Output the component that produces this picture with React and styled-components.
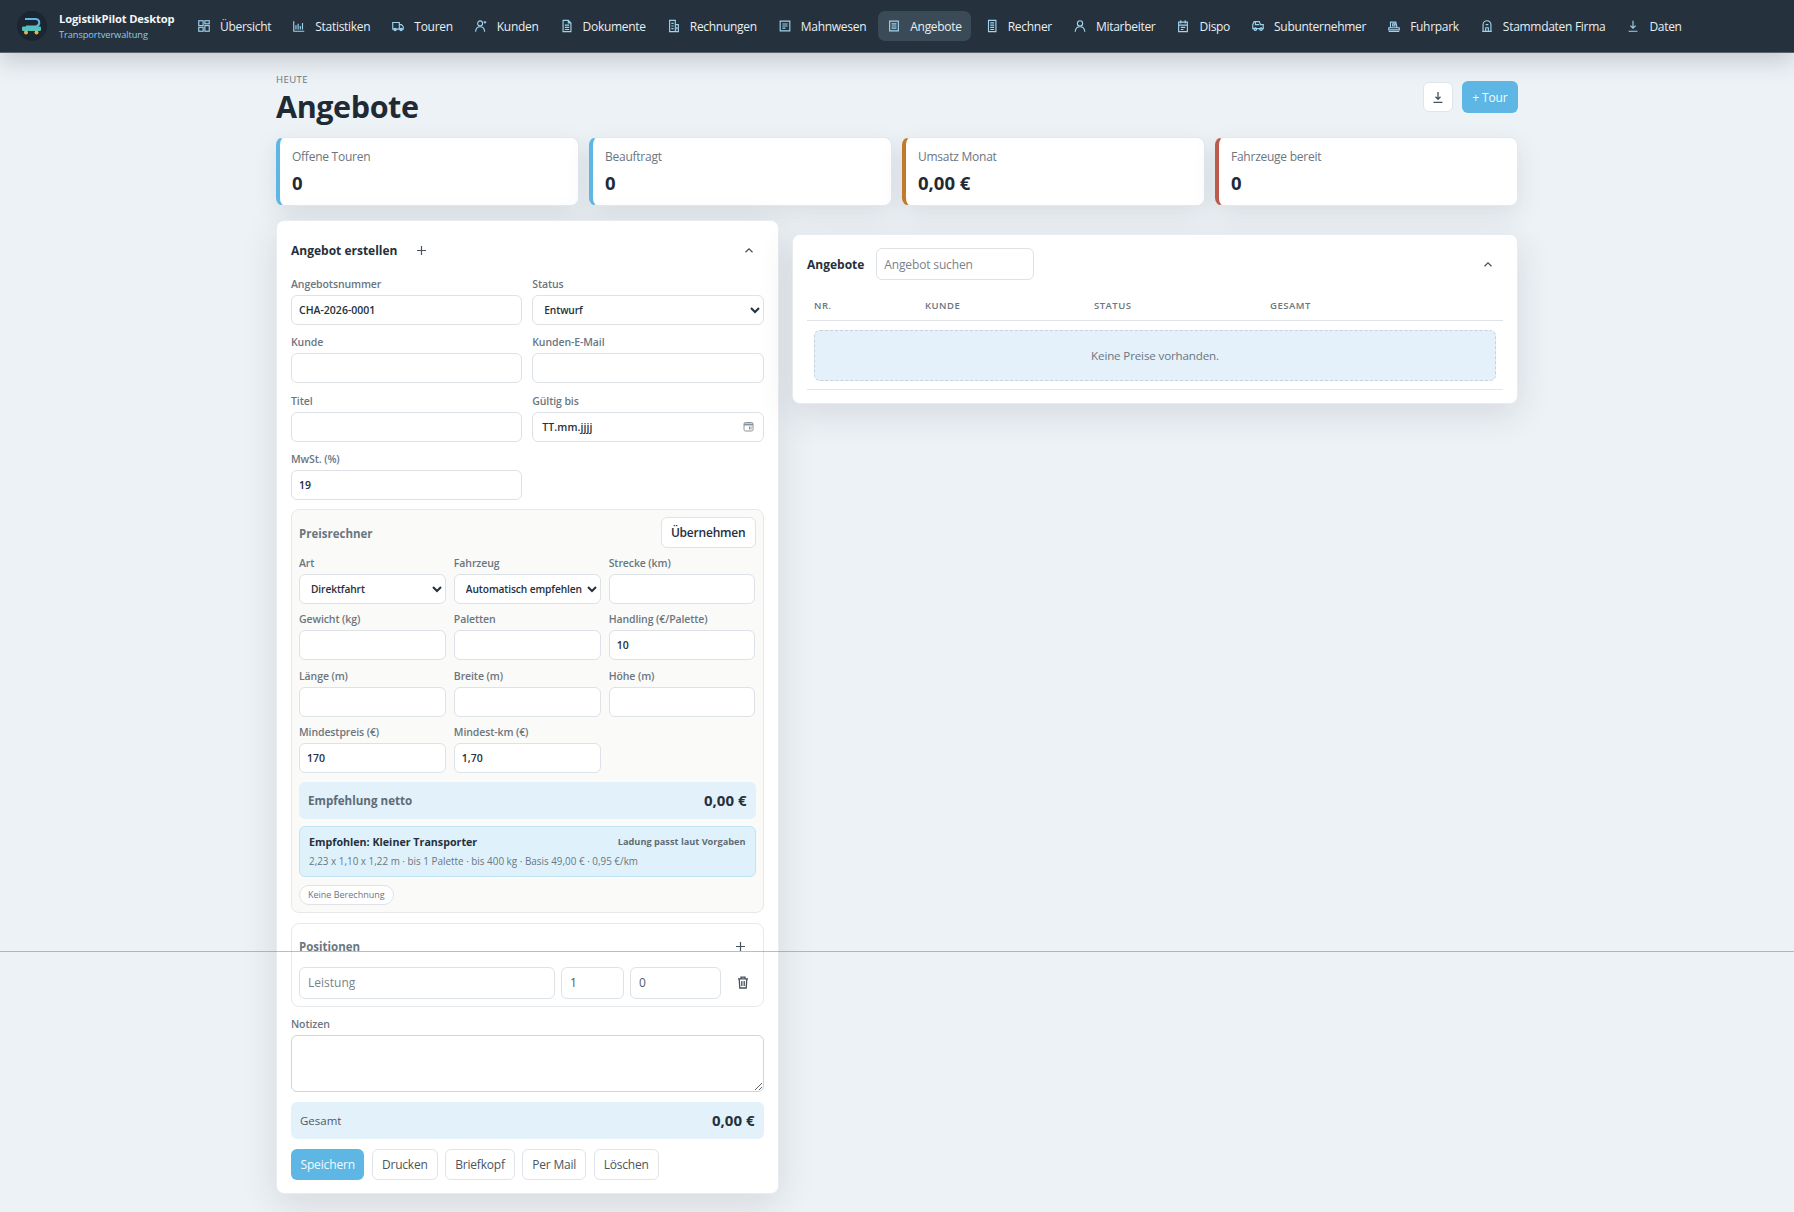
import React from 'react'
import styled, { createGlobalStyle } from 'styled-components'

const GlobalStyle = createGlobalStyle`
    * {
        box-sizing: border-box;
    }
    body {
        margin: 0;
        background: #edf2f6;
        color: #1f2a35;
        font-family: "Open Sans", "Noto Sans", sans-serif;
    }
`

const Page = styled.div`
    position: relative;
    min-height: 1212px;
    background: #edf2f6;
`

const ScreenSeam = styled.div`
    position: absolute;
    top: 951px;
    left: 0;
    right: 0;
    height: 1px;
    background: rgba(112, 124, 134, 0.5);
`

const TopBar = styled.header`
    display: flex;
    align-items: center;
    height: 53px;
    padding-left: 17px;
    background: #25313c;
    border-bottom: 1px solid #59636c;
    box-shadow: 0 8px 24px rgba(30, 45, 60, 0.2);
`

const Brand = styled.div`
    display: flex;
    align-items: center;
    gap: 12px;
    width: 171px;
    flex: none;
`

const BrandMark = styled.div`
    display: flex;
    align-items: center;
    justify-content: center;
    width: 30px;
    height: 30px;
    border-radius: 50%;
    background: #1b2630;
`

const BrandText = styled.div`
    display: flex;
    flex-direction: column;
    gap: 2px;
`

const BrandName = styled.div`
    color: #f3f6f8;
    font-size: 11.2px;
    font-weight: 700;
    line-height: 15px;
    letter-spacing: -0.15px;
    white-space: nowrap;
`

const BrandSub = styled.div`
    color: #8ccbec;
    font-size: 9.3px;
    line-height: 13px;
    letter-spacing: -0.1px;
    white-space: nowrap;
`

const NavList = styled.nav`
    display: flex;
    align-items: center;
    gap: 5px;
`

const NavItem = styled.a`
    display: flex;
    align-items: center;
    gap: 9px;
    height: 30px;
    padding: 0 ${(p) => (p.$active ? 9 : 7)}px 0 9px;
    border-radius: 7px;
    background: ${(p) => (p.$active ? '#3b4a57' : 'transparent')};
    color: #e9eef2;
    font-size: 12px;
    letter-spacing: -0.29px;
    white-space: nowrap;
    svg {
        flex: none;
        color: #9ed4f0;
    }
`

const Main = styled.main`
    width: 1242px;
    margin: 0 auto;
    padding-bottom: 18px;
`

const PageHead = styled.div`
    display: flex;
    justify-content: space-between;
    height: 84px;
`

const Eyebrow = styled.div`
    margin-top: 21px;
    color: #6b7680;
    font-size: 9.6px;
    line-height: 12px;
    letter-spacing: 0.4px;
    text-transform: uppercase;
`

const PageTitle = styled.h1`
    margin: 0;
    color: #1f2a35;
    font-size: 30.5px;
    font-weight: 700;
    line-height: 40px;
    letter-spacing: -0.4px;
`

const HeadActions = styled.div`
    display: flex;
    align-items: center;
    gap: 9px;
    height: 32px;
    margin-top: 28px;
`

const IconButton = styled.button`
    display: flex;
    align-items: center;
    justify-content: center;
    width: 30px;
    height: 30px;
    padding: 0;
    border: 1px solid #dfe5ea;
    border-radius: 6px;
    background: #fff;
    color: #46525d;
`

const PrimaryButton = styled.button`
    height: ${(p) => p.$h || 31}px;
    padding: 0 ${(p) => p.$px || 10.5}px;
    border: 0;
    border-radius: 6px;
    background: #5db6e4;
    color: #f4fbfe;
    font-family: inherit;
    font-size: 12px;
    letter-spacing: -0.15px;
`

const StatGrid = styled.section`
    display: grid;
    grid-template-columns: repeat(4, 1fr);
    gap: 10px;
`

const StatCard = styled.div`
    height: 69px;
    padding: 10px 12px;
    border: 1px solid #e3e8ed;
    border-left: 4px solid ${(p) => p.$accent};
    border-radius: 8px;
    background: #fff;
    box-shadow: 0 8px 24px rgba(30, 45, 60, 0.1);
`

const StatLabel = styled.div`
    color: #6b7680;
    font-size: 12px;
    line-height: 17px;
    letter-spacing: -0.25px;
`

const StatValue = styled.div`
    margin-top: 6px;
    color: #1f2a35;
    font-size: 18.5px;
    font-weight: 700;
    line-height: 24px;
`

const Columns = styled.section`
    display: grid;
    grid-template-columns: 502.5px 726px;
    justify-content: space-between;
    align-items: start;
    margin-top: 14px;
`

const Card = styled.div`
    margin-top: ${(p) => p.$offset || 0}px;
    padding: 13px 14px ${(p) => p.$pb || 13}px;
    border: 1px solid #e8ecf0;
    border-radius: 8px;
    background: #fff;
    box-shadow: 0 10px 36px rgba(30, 45, 60, 0.12);
`

const CardHead = styled.div`
    display: flex;
    align-items: center;
    height: 32px;
    margin-bottom: 10px;
`

const CardTitle = styled.h2`
    margin: 0;
    color: #25303b;
    font-size: 12px;
    font-weight: 700;
    white-space: nowrap;
`

const GhostIcon = styled.span`
    display: flex;
    margin-left: ${(p) => p.$left || 'auto'};
    margin-right: ${(p) => p.$right || 0}px;
    color: #46525d;
`

const FieldGrid = styled.div`
    display: grid;
    grid-template-columns: repeat(${(p) => p.$cols || 2}, 1fr);
    column-gap: ${(p) => p.$gapX || 10}px;
    row-gap: ${(p) => p.$gapY || 9.33}px;
`

const Field = styled.label`
    display: block;
    min-width: 0;
`

const FieldLabel = styled.span`
    display: block;
    height: 16px;
    margin-bottom: 3px;
    color: #6b7680;
    font-size: 10.5px;
    font-weight: 600;
    line-height: 16px;
    letter-spacing: -0.1px;
    white-space: nowrap;
`

const fieldBox = `
    width: 100%;
    height: 30px;
    border: 1px solid #dde2e7;
    border-radius: 6px;
    background: #fff;
    color: #25303b;
    font-family: inherit;
    font-size: 10.5px;
    font-weight: 600;
    outline: none;
`

const TextInput = styled.input`
    ${fieldBox}
    padding: 0 7px;
`

const SelectInput = styled.select`
    ${fieldBox}
    padding: 0 0 0 7px;
    font-size: 10.2px;
    letter-spacing: -0.1px;
`

const DateBox = styled.div`
    ${fieldBox}
    display: flex;
    align-items: center;
    justify-content: space-between;
    padding: 0 9px;
    letter-spacing: 0.1px;
    svg {
        color: #8a949d;
    }
`

const CalcBox = styled.div`
    margin-top: 9px;
    padding: 7px;
    border: 1px solid #e6e9ec;
    border-radius: 8px;
    background: #fafaf8;
`

const CalcHead = styled.div`
    display: flex;
    align-items: center;
    justify-content: space-between;
    margin-bottom: 7px;
    h3 {
        margin-top: 2px;
    }
`

const SectionTitle = styled.h3`
    margin: 0;
    color: #6b7680;
    font-size: 11.5px;
    font-weight: 700;
`

const OutlineButton = styled.button`
    height: 31px;
    padding: 0 ${(p) => p.$px || 9}px;
    border: 1px solid #e0e4e8;
    border-radius: 6px;
    background: #fff;
    color: ${(p) => p.$color || '#4a5560'};
    font-family: inherit;
    font-size: 12px;
    font-weight: ${(p) => p.$weight || 400};
    letter-spacing: -0.2px;
`

const SumBar = styled.div`
    display: flex;
    align-items: center;
    justify-content: space-between;
    height: 37px;
    margin-top: ${(p) => p.$top}px;
    padding: 0 9px;
    border-radius: 6px;
    background: #e3f1fa;
`

const SumLabel = styled.span`
    color: ${(p) => (p.$strong ? '#5f6b75' : '#4f5b65')};
    font-size: ${(p) => (p.$strong ? 11.6 : 11.5)}px;
    font-weight: ${(p) => (p.$strong ? 700 : 400)};
`

const SumValue = styled.span`
    color: #25303b;
    font-size: 15px;
    font-weight: 700;
`

const Recommendation = styled.div`
    height: 51px;
    margin-top: 7px;
    padding: 6px 9px;
    border: 1px solid #bfe3f5;
    border-radius: 6px;
    background: #dff2fc;
`

const RecommendationRow = styled.div`
    display: flex;
    align-items: center;
    justify-content: space-between;
    height: 18px;
`

const RecommendationTitle = styled.span`
    color: #25303b;
    font-size: 10.7px;
    font-weight: 700;
`

const RecommendationNote = styled.span`
    color: #5f6b75;
    font-size: 9.2px;
    font-weight: 700;
`

const RecommendationText = styled.div`
    margin-top: 3px;
    color: #6b7680;
    font-size: 9.9px;
    line-height: 14px;
`

const Pill = styled.div`
    display: flex;
    align-items: center;
    width: 95px;
    height: 20px;
    margin-top: 8px;
    padding-left: 8px;
    border: 1px solid #dfe3e7;
    border-radius: 10px;
    background: #fff;
    color: #6b7680;
    font-size: 9px;
`

const PositionBox = styled.div`
    margin-top: 10px;
    padding: 8px 7px 7px;
    border: 1px solid #e6e9ec;
    border-radius: 8px;
`

const PositionHead = styled.div`
    display: flex;
    align-items: center;
    justify-content: space-between;
    height: 30px;
    margin-bottom: 5px;
`

const PositionRow = styled.div`
    display: grid;
    grid-template-columns: 256px 63px 91px 1fr;
    column-gap: 6px;
    align-items: center;
`

const PositionInput = styled.input`
    width: 100%;
    height: 32px;
    padding: 0 8px;
    border: 1px solid #dde2e7;
    border-radius: 6px;
    background: #fff;
    color: #4f5b65;
    font-family: inherit;
    font-size: 12px;
    outline: none;
    &::placeholder {
        color: #79838c;
    }
`

const TrashCell = styled.div`
    display: flex;
    justify-content: center;
    padding-left: 4px;
    color: #46525d;
`

const NotesField = styled.label`
    display: block;
    margin-top: 9px;
`

const Notes = styled.textarea`
    display: block;
    width: 100%;
    height: 57px;
    border: 1px solid #cfd5da;
    border-radius: 6px;
    background: #fff;
    outline: none;
`

const ActionRow = styled.div`
    display: flex;
    gap: 7.5px;
    margin-top: 10px;
`

const SearchInput = styled.input`
    width: 158px;
    height: 32px;
    margin-left: 12px;
    padding: 0 7px;
    border: 1px solid #dde2e7;
    border-radius: 6px;
    background: #fff;
    font-family: inherit;
    font-size: 12px;
    letter-spacing: -0.15px;
    outline: none;
    &::placeholder {
        color: #79838c;
    }
`

const TableHead = styled.div`
    display: grid;
    grid-template-columns: 111px 169px 176px 1fr;
    align-items: center;
    height: 31px;
    margin-top: 9px;
    padding-left: 7px;
    border-bottom: 1px solid #dde3e8;
`

const HeadCell = styled.span`
    color: #6b7680;
    font-size: 9.5px;
    font-weight: 600;
    letter-spacing: 0.5px;
    text-transform: uppercase;
`

const TableBody = styled.div`
    padding: 9px 7px 8px;
    border-bottom: 1px solid #e3e7eb;
`

const EmptyState = styled.div`
    display: flex;
    align-items: center;
    justify-content: center;
    height: 51px;
    border: 1px dashed #c6d3dc;
    border-radius: 6px;
    background: #e4f1fa;
    color: #6b7680;
    font-size: 11.6px;
    letter-spacing: -0.15px;
`

const navIcons = {
    overview: (
        <>
            <rect x="2" y="2" width="5" height="5.5" />
            <rect x="9" y="2" width="5" height="3.5" />
            <rect x="2" y="9.5" width="5" height="4.5" />
            <rect x="9" y="7.5" width="5" height="6.5" />
        </>
    ),
    stats: <path d="M2 2.5V14h12M4.5 12V7M7 12V5.5M9.5 12V8M12 12V4.5" />,
    truck: (
        <>
            <path d="M2 4h7.5v7.5H2zM9.5 6.5h2.5l2 2.2v2.8H9.5z" />
            <circle cx="4.7" cy="12" r="1.3" />
            <circle cx="11.5" cy="12" r="1.3" />
        </>
    ),
    customers: (
        <>
            <circle cx="7" cy="5" r="2.8" />
            <path d="M1.8 14.5c.3-3.6 2.3-5.6 5.2-5.6s4.9 2 5.2 5.6M12.5 2.2v3M11 3.7h3" />
        </>
    ),
    document: <path d="M3.5 1.5h6l3 3v10h-9zM5.5 7h5M5.5 9.5h5M5.5 12h5M9.5 1.5v3h3" />,
    invoice: <path d="M3 1.5h6.5v13H3zM9.5 6.5H13v8H9.5zM5 5h2.5M5 8h2.5M5 11h2.5M11.2 9v3" />,
    reminder: <path d="M2.5 2.5h11v11h-11zM5 5.7h6M5 8h6M5 10.5h3.5" />,
    offer: <path d="M3 2.5h10v11H3zM5.2 5.5h5.6M5.2 8h5.6M5.2 10.5h5.6" />,
    calculator: <path d="M4 1.5h8.5v13H4zM6 4.5h4.5M6 7h4.5M6 9.5h4.5M6 12h4.5" />,
    staff: (
        <>
            <circle cx="8" cy="5" r="3" />
            <path d="M2.5 14.5c.3-3.6 2.4-5.6 5.5-5.6s5.2 2 5.5 5.6" />
        </>
    ),
    dispatch: <path d="M3 3.5h10v11H3zM3 7h10M5.5 1.5v3.5M10.5 1.5v3.5M5.5 9.5h5M5.5 12h3" />,
    contractor: (
        <>
            <path d="M3.5 3h6l1.5 3.5h3V11H2V6.5zM5 3v3.5h4.5" />
            <circle cx="5" cy="11.5" r="1.5" />
            <circle cx="11.5" cy="11.5" r="1.5" />
        </>
    ),
    fleet: <path d="M4 10V3.5h6L11.5 10M6.5 5.5h2.5v2.5h-2.5zM2 10h12v2.5H2zM2 14.3h12" />,
    company: <path d="M3.5 14V6.5a4.5 4.5 0 0 1 9 0V14zM2.5 14.3h11M6.5 14V10h3v4M6.5 6.5h3" />,
    data: <path d="M8 2v8M5 7.5 8 10.5l3-3M3 14h10" />,
}

const NavIcon = ({ name }) => (
    <svg width="14" height="14" viewBox="0 0 16 16" fill="none" stroke="currentColor" strokeWidth="1.3">
        {navIcons[name]}
    </svg>
)

const PlusIcon = () => (
    <svg width="11" height="11" viewBox="0 0 11 11" fill="none" stroke="currentColor" strokeWidth="1.2">
        <path d="M5.5 1v9M1 5.5h9" />
    </svg>
)

const ChevronUp = () => (
    <svg width="10" height="7" viewBox="0 0 10 7" fill="none" stroke="currentColor" strokeWidth="1.3">
        <path d="M1.5 5.2 5 1.8l3.5 3.4" />
    </svg>
)

const CalendarIcon = () => (
    <svg width="11" height="11" viewBox="0 0 11 11" fill="none" stroke="currentColor">
        <rect x="1" y="1.5" width="9" height="8.5" rx="1.5" />
        <path d="M1 3.5h9" strokeWidth="2" />
        <path d="M6.5 5.5v3M8 5.5v3" />
    </svg>
)

const TrashIcon = () => (
    <svg width="12" height="13" viewBox="0 0 12 13" fill="none" stroke="currentColor" strokeWidth="1.3">
        <path d="M1 2.8h10M4 2.5V1.2h4v1.3M2.2 3l.6 9h6.4l.6-9M4.8 5v5M7.2 5v5" />
    </svg>
)

const DownloadIcon = () => (
    <svg width="12" height="13" viewBox="0 0 12 13" fill="none" stroke="currentColor" strokeWidth="1.3">
        <path d="M6 1v7M3.5 5.8 6 8.3l2.5-2.5M1.5 11.3h9" />
    </svg>
)

const LogoIcon = () => (
    <svg width="22" height="20" viewBox="0 0 22 20">
        <path d="M4 3h10.5a3.5 3.5 0 0 1 0 7.5H5" fill="none" stroke="#5db6e4" strokeWidth="2.2" />
        <rect x="1" y="10.5" width="19" height="4.5" rx="1.2" fill="#52c3b8" />
        <circle cx="5" cy="16.5" r="2" fill="#e5b552" />
        <circle cx="15.5" cy="16.5" r="2" fill="#e5b552" />
    </svg>
)

const navItems = [
    ['overview', 'Übersicht'],
    ['stats', 'Statistiken'],
    ['truck', 'Touren'],
    ['customers', 'Kunden'],
    ['document', 'Dokumente'],
    ['invoice', 'Rechnungen'],
    ['reminder', 'Mahnwesen'],
    ['offer', 'Angebote'],
    ['calculator', 'Rechner'],
    ['staff', 'Mitarbeiter'],
    ['dispatch', 'Dispo'],
    ['contractor', 'Subunternehmer'],
    ['fleet', 'Fuhrpark'],
    ['company', 'Stammdaten Firma'],
    ['data', 'Daten'],
]

const stats = [
    ['Offene Touren', '0', '#5db6e4'],
    ['Beauftragt', '0', '#5db6e4'],
    ['Umsatz Monat', '0,00 €', '#c17a2c'],
    ['Fahrzeuge bereit', '0', '#bd5a4c'],
]

const calcFields = [
    ['Gewicht (kg)', ''],
    ['Paletten', ''],
    ['Handling (€/Palette)', '10'],
    ['Länge (m)', ''],
    ['Breite (m)', ''],
    ['Höhe (m)', ''],
    ['Mindestpreis (€)', '170'],
    ['Mindest-km (€)', '1,70'],
]

const InputField = ({ label, value }) => (
    <Field>
        <FieldLabel>{label}</FieldLabel>
        <TextInput value={value} readOnly />
    </Field>
)

const App = () => (
    <Page>
        <GlobalStyle />
        <TopBar>
            <Brand>
                <BrandMark>
                    <LogoIcon />
                </BrandMark>
                <BrandText>
                    <BrandName>LogistikPilot Desktop</BrandName>
                    <BrandSub>Transportverwaltung</BrandSub>
                </BrandText>
            </Brand>
            <NavList>
                {navItems.map(([icon, label]) => (
                    <NavItem key={label} $active={label === 'Angebote'}>
                        <NavIcon name={icon} />
                        {label}
                    </NavItem>
                ))}
            </NavList>
        </TopBar>

        <Main>
            <PageHead>
                <div>
                    <Eyebrow>Heute</Eyebrow>
                    <PageTitle>Angebote</PageTitle>
                </div>
                <HeadActions>
                    <IconButton>
                        <DownloadIcon />
                    </IconButton>
                    <PrimaryButton $h={32}>+ Tour</PrimaryButton>
                </HeadActions>
            </PageHead>

            <StatGrid>
                {stats.map(([label, value, accent]) => (
                    <StatCard key={label} $accent={accent}>
                        <StatLabel>{label}</StatLabel>
                        <StatValue>{value}</StatValue>
                    </StatCard>
                ))}
            </StatGrid>

            <Columns>
                <Card>
                    <CardHead>
                        <CardTitle>Angebot erstellen</CardTitle>
                        <GhostIcon $left="18px">
                            <PlusIcon />
                        </GhostIcon>
                        <GhostIcon $right={10}>
                            <ChevronUp />
                        </GhostIcon>
                    </CardHead>

                    <FieldGrid>
                        <InputField label="Angebotsnummer" value="CHA-2026-0001" />
                        <Field>
                            <FieldLabel>Status</FieldLabel>
                            <SelectInput defaultValue="Entwurf">
                                <option>Entwurf</option>
                            </SelectInput>
                        </Field>
                        <InputField label="Kunde" value="" />
                        <InputField label="Kunden-E-Mail" value="" />
                        <InputField label="Titel" value="" />
                        <Field>
                            <FieldLabel>Gültig bis</FieldLabel>
                            <DateBox>
                                TT.mm.jjjj
                                <CalendarIcon />
                            </DateBox>
                        </Field>
                        <InputField label="MwSt. (%)" value="19" />
                    </FieldGrid>

                    <CalcBox>
                        <CalcHead>
                            <SectionTitle>Preisrechner</SectionTitle>
                            <OutlineButton $color="#25303b" $weight={600}>
                                Übernehmen
                            </OutlineButton>
                        </CalcHead>
                        <FieldGrid $cols={3} $gapX={8} $gapY={7.33}>
                            <Field>
                                <FieldLabel>Art</FieldLabel>
                                <SelectInput defaultValue="Direktfahrt">
                                    <option>Direktfahrt</option>
                                </SelectInput>
                            </Field>
                            <Field>
                                <FieldLabel>Fahrzeug</FieldLabel>
                                <SelectInput defaultValue="Automatisch empfehlen">
                                    <option>Automatisch empfehlen</option>
                                </SelectInput>
                            </Field>
                            <InputField label="Strecke (km)" value="" />
                            {calcFields.map(([label, value]) => (
                                <InputField key={label} label={label} value={value} />
                            ))}
                        </FieldGrid>
                        <SumBar $top={9}>
                            <SumLabel $strong>Empfehlung netto</SumLabel>
                            <SumValue>0,00 €</SumValue>
                        </SumBar>
                        <Recommendation>
                            <RecommendationRow>
                                <RecommendationTitle>Empfohlen: Kleiner Transporter</RecommendationTitle>
                                <RecommendationNote>Ladung passt laut Vorgaben</RecommendationNote>
                            </RecommendationRow>
                            <RecommendationText>
                                2,23 x 1,10 x 1,22 m · bis 1 Palette · bis 400 kg · Basis 49,00 € · 0,95 €/km
                            </RecommendationText>
                        </Recommendation>
                        <Pill>Keine Berechnung</Pill>
                    </CalcBox>

                    <PositionBox>
                        <PositionHead>
                            <SectionTitle>Positionen</SectionTitle>
                            <GhostIcon $right={10}>
                                <PlusIcon />
                            </GhostIcon>
                        </PositionHead>
                        <PositionRow>
                            <PositionInput placeholder="Leistung" readOnly />
                            <PositionInput value="1" readOnly />
                            <PositionInput value="0" readOnly />
                            <TrashCell>
                                <TrashIcon />
                            </TrashCell>
                        </PositionRow>
                    </PositionBox>

                    <NotesField>
                        <FieldLabel>Notizen</FieldLabel>
                        <Notes readOnly />
                    </NotesField>

                    <SumBar $top={10}>
                        <SumLabel>Gesamt</SumLabel>
                        <SumValue>0,00 €</SumValue>
                    </SumBar>

                    <ActionRow>
                        <PrimaryButton $px={9.5}>Speichern</PrimaryButton>
                        <OutlineButton>Drucken</OutlineButton>
                        <OutlineButton>Briefkopf</OutlineButton>
                        <OutlineButton>Per Mail</OutlineButton>
                        <OutlineButton>Löschen</OutlineButton>
                    </ActionRow>
                </Card>

                <Card $offset={14} $pb={13}>
                    <CardHead>
                        <CardTitle>Angebote</CardTitle>
                        <SearchInput placeholder="Angebot suchen" readOnly />
                        <GhostIcon $right={10}>
                            <ChevronUp />
                        </GhostIcon>
                    </CardHead>
                    <TableHead>
                        <HeadCell>Nr.</HeadCell>
                        <HeadCell>Kunde</HeadCell>
                        <HeadCell>Status</HeadCell>
                        <HeadCell>Gesamt</HeadCell>
                    </TableHead>
                    <TableBody>
                        <EmptyState>Keine Preise vorhanden.</EmptyState>
                    </TableBody>
                </Card>
            </Columns>
        </Main>
        <ScreenSeam />
    </Page>
)

export default App
